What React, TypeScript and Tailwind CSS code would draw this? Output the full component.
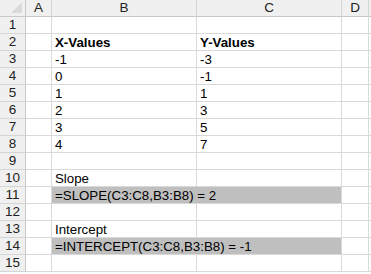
import React from 'react';

// Worksheet snapshot: two value columns plus SLOPE / INTERCEPT results.
type Row = { b?: string; c?: string; bold?: boolean; fill?: boolean };

const rows: Row[] = [
  {},
  { b: 'X-Values', c: 'Y-Values', bold: true },
  { b: '-1', c: '-3' },
  { b: '0', c: '-1' },
  { b: '1', c: '1' },
  { b: '2', c: '3' },
  { b: '3', c: '5' },
  { b: '4', c: '7' },
  {},
  { b: 'Slope' },
  { b: '=SLOPE(C3:C8,B3:B8) = 2', fill: true },
  {},
  { b: 'Intercept' },
  { b: '=INTERCEPT(C3:C8,B3:B8) = -1', fill: true },
  {},
];

const cols = 'grid grid-cols-[26px_26px_145px_145px_27px_1fr]';
const head = 'flex h-[17px] items-center justify-center border-r border-b border-[#d5d5d5] bg-[#f0f0f0] text-[13.5px] leading-none text-[#222]';
const cell = 'h-[17px] border-r border-b border-[#d9d9d9] bg-white';
const text = ' flex items-end pb-[1px] pl-[3px] text-[13.3px] leading-none whitespace-nowrap';

export default function App() {
  return (
    <div className="h-[274px] w-[371px] overflow-hidden bg-white font-['Liberation_Sans',Arial,sans-serif] text-black">
      <div className={cols}>
        <div className="relative h-[17px] border-r border-b border-[#c8c8c8] bg-[#f0f0f0]">
          <svg className="absolute right-[3px] bottom-[3px]" width="11" height="11" viewBox="0 0 11 11">
            <path d="M11 0 L11 11 L0 11 Z" fill="#dadada" />
          </svg>
        </div>
        <div className={head + ' border-b-[#c8c8c8]'}>A</div>
        <div className={head + ' border-b-[#c8c8c8]'}>B</div>
        <div className={head + ' border-b-[#c8c8c8]'}>C</div>
        <div className={head + ' border-b-[#c8c8c8]'}>D</div>
        <div className="h-[17px] border-b border-[#c8c8c8] bg-[#f0f0f0]" />

        {rows.map((r, i) => (
          <React.Fragment key={i}>
            <div className={head + ' border-r-[#c8c8c8]'}>{i + 1}</div>
            <div className={cell} />
            {r.fill ? (
              <div className={'col-span-2 h-[17px] border-r border-b border-[#d9d9d9] bg-[#bfbfbf]' + text}>
                {r.b}
              </div>
            ) : (
              <>
                <div className={cell + text + (r.bold ? ' font-bold' : '')}>{r.b}</div>
                <div className={cell + text + (r.bold ? ' font-bold' : '')}>{r.c}</div>
              </>
            )}
            <div className={cell} />
            <div className="h-[17px] border-b border-[#d9d9d9] bg-white" />
          </React.Fragment>
        ))}
      </div>
    </div>
  );
}
